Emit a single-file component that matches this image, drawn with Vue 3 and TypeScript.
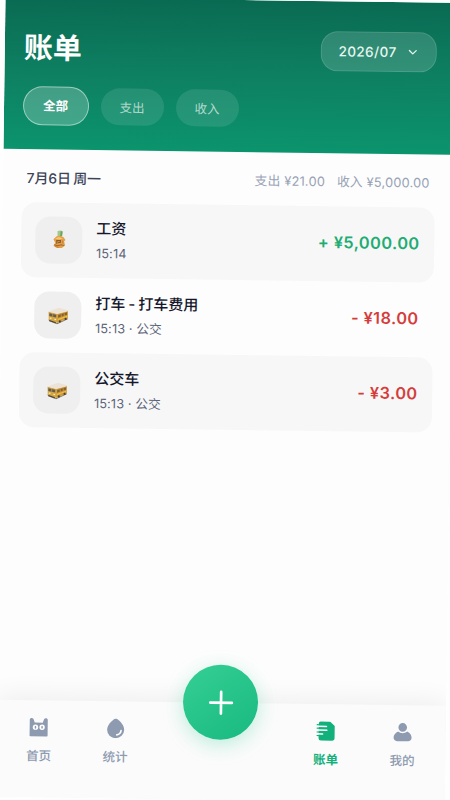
<script setup lang="ts">
import { ref } from 'vue'

type IconName = 'money' | 'bus'

interface Bill {
  id: number
  title: string
  meta: string
  amount: string
  income: boolean
  icon: IconName
}

const filters = ['全部', '支出', '收入']
const activeFilter = ref('全部')
const activeTab = ref('账单')

const bills: Bill[] = [
  { id: 1, title: '工资', meta: '15:14', amount: '+ ¥5,000.00', income: true, icon: 'money' },
  { id: 2, title: '打车 - 打车费用', meta: '15:13 · 公交', amount: '- ¥18.00', income: false, icon: 'bus' },
  { id: 3, title: '公交车', meta: '15:13 · 公交', amount: '- ¥3.00', income: false, icon: 'bus' },
]
</script>

<template>
  <div class="viewport">
    <div class="screen">
      <header class="header">
        <div class="title-row">
          <h1 class="title">账单</h1>
          <button class="month">
            <span>2026/07</span>
            <svg width="10" height="10" viewBox="0 0 10 10" fill="none" stroke="currentColor" stroke-width="1.3" stroke-linecap="round" stroke-linejoin="round">
              <path d="M1.6 3.3 5 6.6l3.4-3.3" />
            </svg>
          </button>
        </div>
        <div class="filters">
          <button
            v-for="f in filters"
            :key="f"
            class="filter"
            :class="{ active: f === activeFilter }"
            @click="activeFilter = f"
          >{{ f }}</button>
        </div>
      </header>

      <main class="content">
        <div class="day">
          <span class="date">7月6日 周一</span>
          <span class="totals"><span>支出 ¥21.00</span><span>收入 ¥5,000.00</span></span>
        </div>
        <ul class="bills">
          <li v-for="b in bills" :key="b.id" class="bill">
            <div class="thumb">
              <svg v-if="b.icon === 'money'" width="16" height="20" viewBox="0 0 16 20">
                <path d="M6.200 1.600 9.600 1l1.800 1.200-.6 4.700-4.600.4z" fill="#a3c98a" />
                <path d="M9.200 1.700h2l-.5 5-1.800.2z" fill="#6fa35e" />
                <path d="M2.200 9.800 5 6.900l3.400-.8 3.700 1.300 2.200 3-1.400 1.300 1 4.300-3.200 2.300-4.600.2-3.800-1.900 1.700-3.400z" fill="#e2a04a" />
                <path d="m3.600 9.200 4-1.800 4.200 1.500-3.800 1z" fill="#f4c877" />
                <path d="M5.600 14.300v-3.200h3.600v1.600l-2.400.5" fill="none" stroke="#8d592e" stroke-width="1.200" />
                <path d="m3 15.300 3.400 1 3.600-1.200 3 .9" fill="none" stroke="#a8652c" stroke-width="1" />
                <path d="m11.300 10.900.5 3M4 17l3.500.8" fill="none" stroke="#c47a30" stroke-width=".9" />
              </svg>
              <svg v-else width="22" height="19" viewBox="0 0 22 19">
                <path d="m1.300 14.200 8.300 3.500 11-5.200v1.200L10 18.700l-8-2.900z" fill="#7d7468" />
                <path d="M1.300 6.400 9.900 8.200v9.200l-8.300-2.900z" fill="#d3a544" />
                <path d="M9.900 8.200 20.600 5v7.800L9.900 17.400z" fill="#d09a36" />
                <path d="M1.300 6 11.500 2.200l9.100 2.400v1L10 8.600z" fill="#ece3d6" />
                <path d="m2.100 7.800 6.900 1.400v2.700l-6.900-1.300z" fill="#655b4c" />
                <path d="m10.900 9.400 9-2.700v2.500l-9 3z" fill="#86612f" />
                <path d="m5.500 8.400v2.900M14 8.600v2.700m3-3.600v2.700" stroke="#d5a65b" stroke-width=".7" />
                <path d="m2.500 12.500 1.800.4m3 .8 1.600.4" stroke="#fff0a2" stroke-width="1.100" />
                <path d="m10.800 14 9.300-3.500" stroke="#eec24e" stroke-width="1" />
                <circle cx="12.700" cy="15.900" r="1.100" fill="#46403a" />
                <circle cx="18.400" cy="13.300" r="1.100" fill="#46403a" />
                <path d="m2.300 15 6.400 2.200" stroke="#46403a" stroke-width="1" />
              </svg>
            </div>
            <div class="info">
              <div class="name">{{ b.title }}</div>
              <div class="meta">{{ b.meta }}</div>
            </div>
            <div class="amount" :class="{ income: b.income }">{{ b.amount }}</div>
          </li>
        </ul>
      </main>

      <nav class="nav">
        <button class="tab" :class="{ active: activeTab === '首页' }" @click="activeTab = '首页'">
          <svg width="20" height="20" viewBox="0 0 20 20">
            <path d="M1 18.300V2.600C1 .6 3.500.1 4.600 1.600L6 5.300h8l1.400-3.700C16.500.1 19 .6 19 2.600v15.700q0 .7-.7.7H1.700q-.7 0-.7-.7Z" fill="currentColor" />
            <circle cx="6.800" cy="9.900" r="2.700" fill="#fff" />
            <circle cx="13.400" cy="9.900" r="2.700" fill="#fff" />
            <ellipse cx="6.800" cy="9.900" rx=".8" ry="1.500" fill="currentColor" />
            <ellipse cx="13.400" cy="9.900" rx=".8" ry="1.500" fill="currentColor" />
          </svg>
          <span>首页</span>
        </button>
        <button class="tab" :class="{ active: activeTab === '统计' }" @click="activeTab = '统计'">
          <svg width="20" height="20" viewBox="0 0 20 20">
            <path d="M8.600.7q1.400-1 2.800 0C14.600 3 18.500 7 18.500 11.500a8.500 8.300 0 0 1-17 0C1.500 7 5.400 3 8.600.7Z" fill="currentColor" />
            <path d="M15.400 12.200c-.3 2.300-1.900 3.900-4.200 4.300" fill="none" stroke="#fff" stroke-width="1.600" stroke-linecap="round" />
          </svg>
          <span>统计</span>
        </button>
        <span class="nav-gap"></span>
        <button class="tab" :class="{ active: activeTab === '账单' }" @click="activeTab = '账单'">
          <svg width="20" height="20" viewBox="0 0 20 20">
            <path d="M5 .5h9.500L19 4.700v12.100q0 2.700-2.700 2.700H5.500Q3 19.500 3 17V3Q3 .5 5 .5Z" fill="currentColor" />
            <path d="M2 5.200h8.800M2 9h9.200M2 12.800h5" fill="none" stroke="#fff" stroke-width="1.500" stroke-linecap="round" />
            <path d="M1 3.600h2.400M1 7.100h2.400M1 10.900h2.400M1 14.500h2.400" fill="none" stroke="currentColor" stroke-width="1.100" />
          </svg>
          <span>账单</span>
        </button>
        <button class="tab" :class="{ active: activeTab === '我的' }" @click="activeTab = '我的'">
          <svg width="20" height="20" viewBox="0 0 20 20" fill="currentColor">
            <circle cx="10" cy="5.200" r="4.300" />
            <path d="M5.400 9.300Q7.500 11 10 11t4.600-1.700c2.900 1.400 4.400 3.800 4.400 6.200 0 2.300-1.500 3.500-3.600 3.500H4.600C2.500 19 1 17.800 1 15.500c0-2.400 1.500-4.800 4.400-6.200Z" />
          </svg>
          <span>我的</span>
        </button>
        <button class="fab" aria-label="记一笔">
          <svg width="26" height="26" viewBox="0 0 26 26" fill="none" stroke="#fff" stroke-width="2.700" stroke-linecap="round">
            <path d="M13 2.200v21.600M2.200 13h21.600" />
          </svg>
        </button>
      </nav>
    </div>
  </div>
</template>

<style>
html,
body {
  margin: 0;
  background: #fefefe;
  overflow: hidden;
}
</style>

<style scoped>
.viewport {
  width: 450px;
  height: 800px;
  overflow: hidden;
  font-family: Inter, 'Noto Sans CJK SC', sans-serif;
}
.screen {
  box-sizing: border-box;
  width: 450px;
  height: 800px;
  display: flex;
  flex-direction: column;
  background: #fdfdfd;
  overflow: hidden;
  transform: translate(5.5px, -3.2px) rotate(0.77deg);
  transform-origin: 0 0;
}
button {
  margin: 0;
  padding: 0;
  border: 0;
  background: none;
  font: inherit;
}
.header {
  box-sizing: border-box;
  height: 151.5px;
  flex: none;
  padding: 29px 18.5px 0;
  background: linear-gradient(#096a52 0%, #0e8062 50%, #0b946d 100%);
}
.title-row {
  height: 41px;
  display: flex;
  align-items: center;
  justify-content: space-between;
}
.title {
  margin: 0;
  padding: 2px 0 0 0.5px;
  font-size: 29px;
  line-height: 40px;
  font-weight: 700;
  color: #fff;
}
.month {
  box-sizing: border-box;
  width: 115.5px;
  height: 40px;
  display: flex;
  align-items: center;
  justify-content: center;
  gap: 11px;
  padding-right: 1px;
  border: 1px solid rgba(255, 255, 255, 0.13);
  border-radius: 17px;
  background: rgba(255, 255, 255, 0.15);
  color: #e8f7f0;
  font-size: 13.5px;
  font-weight: 500;
  letter-spacing: 0.45px;
}
.filters {
  display: flex;
  align-items: center;
  gap: 12px;
  height: 39px;
  margin-top: 19px;
}
.filter {
  box-sizing: border-box;
  width: 63px;
  height: 37px;
  padding-bottom: 1px;
  border-radius: 19px;
  background: rgba(255, 255, 255, 0.1);
  color: rgba(255, 255, 255, 0.65);
  font-size: 12.5px;
}
.filter.active {
  width: 66px;
  height: 39px;
  padding-bottom: 2px;
  border: 1.2px solid rgba(255, 255, 255, 0.48);
  border-radius: 20px;
  background: rgba(255, 255, 255, 0.22);
  color: #fff;
  font-weight: 700;
}
.content {
  flex: 1;
  padding: 0 18.5px;
}
.day {
  box-sizing: border-box;
  height: 53px;
  padding: 3px 5px 0;
  display: flex;
  align-items: center;
  justify-content: space-between;
}
.date {
  font-size: 13.9px;
  font-weight: 500;
  word-spacing: -1.5px;
  color: #3c4458;
}
.totals {
  display: flex;
  gap: 12px;
  font-size: 12.8px;
  letter-spacing: 0.18px;
  color: #98a2b5;
}
.bills {
  margin: 0;
  padding: 0;
  list-style: none;
}
.bill {
  box-sizing: border-box;
  height: 75px;
  padding: 0 14.5px;
  display: flex;
  align-items: center;
  border-radius: 15px;
}
.bill:nth-child(odd) {
  background: #f7f7f7;
}
.thumb {
  width: 47px;
  height: 47px;
  flex: none;
  display: flex;
  align-items: center;
  justify-content: center;
  border-radius: 15px;
  background: #efefef;
}
.info {
  flex: 1;
  padding-top: 2px;
  margin-left: 14px;
}
.name {
  font-size: 15px;
  line-height: 24px;
  font-weight: 500;
  word-spacing: -1px;
  color: #15182c;
}
.meta {
  margin-top: 2px;
  font-size: 12.7px;
  line-height: 22px;
  letter-spacing: 0.12px;
  color: #5b6478;
}
.amount {
  padding-bottom: 2px;
  font-size: 16.3px;
  font-weight: 600;
  letter-spacing: 0.45px;
  margin-right: -0.4px;
  color: #d53d3d;
}
.amount.income {
  color: #20ac72;
}
.nav {
  box-sizing: border-box;
  position: relative;
  flex: none;
  height: 97.5px;
  padding: 17px 5px 0;
  display: flex;
  align-items: flex-start;
  background: #fbfbfb;
  box-shadow: 0 -5px 26px rgba(0, 0, 0, 0.06);
}
.tab {
  width: 76.5px;
  flex: none;
  display: flex;
  flex-direction: column;
  align-items: center;
  gap: 9px;
  color: #8d9ab0;
  font-size: 12.5px;
  line-height: 20px;
  font-weight: 500;
}
.tab.active {
  color: #12b07a;
  font-weight: 700;
}
.nav-gap {
  flex: 1;
}
.fab {
  position: absolute;
  left: 187px;
  top: -37.5px;
  width: 75px;
  height: 75px;
  display: flex;
  align-items: center;
  justify-content: center;
  border-radius: 50%;
  background: linear-gradient(145deg, #35cf94, #18b981);
  box-shadow: 0 5px 20px rgba(30, 200, 140, 0.28);
}
</style>
